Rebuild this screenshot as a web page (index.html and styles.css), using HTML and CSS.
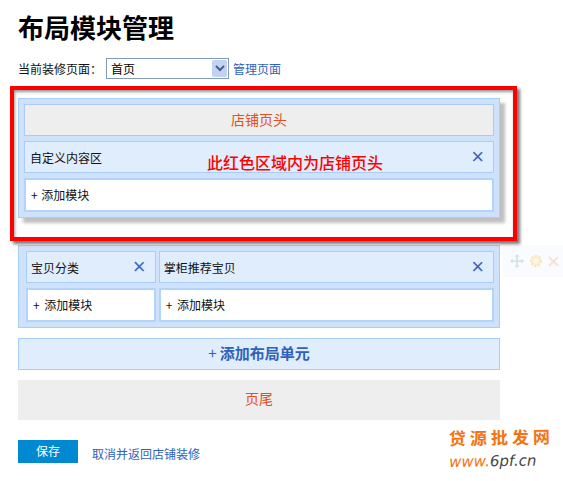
FILE: index.html
```html
<!DOCTYPE html>
<html lang="zh-CN">
<head>
    <meta charset="UTF-8">
    <title>布局模块管理</title>
    <link rel="stylesheet" href="styles.css">
</head>
<body>
    <main class="page">
        <h1>布局模块管理</h1>
        <div class="page-select">
            <span>当前装修页面：</span>
            <div class="select-box">
                <select>
                    <option>首页</option>
                </select>
                <span class="select-arrow">
                    <svg width="10" height="7" viewBox="0 0 10 7"><path d="M1 1l4 4 4-4" fill="none" stroke="#4a5f85" stroke-width="2"/></svg>
                </span>
            </div>
            <a href="#">管理页面</a>
        </div>

        <section class="unit unit-head">
            <div class="bar-grey">店铺页头</div>
            <div class="module">
                <span>自定义内容区</span>
                <a class="close" href="#">×</a>
            </div>
            <div class="add">+ 添加模块</div>
        </section>

        <section class="unit unit-cols">
            <div class="col col-side">
                <div class="module">
                    <span>宝贝分类</span>
                    <a class="close" href="#">×</a>
                </div>
                <div class="add">+ 添加模块</div>
            </div>
            <div class="col col-main">
                <div class="module">
                    <span>掌柜推荐宝贝</span>
                    <a class="close" href="#">×</a>
                </div>
                <div class="add">+ 添加模块</div>
            </div>
            <div class="unit-tools">
                <svg width="14" height="14" viewBox="0 0 16 16"><path d="M8 0l3 3H9v4h4V5l3 3-3 3V9H9v4h2l-3 3-3-3h2V9H3v2L0 8l3-3v2h4V3H5z" fill="#d6e2ea"/></svg>
                <svg width="14" height="14" viewBox="0 0 16 16"><circle cx="8" cy="8" r="5.5" fill="#fdf3da" stroke="#f9e5bd" stroke-width="3" stroke-dasharray="2.5 1.5"/><circle cx="8" cy="8" r="3.5" fill="#fef9ec" stroke="#fae9c8"/></svg>
                <svg width="11" height="11" viewBox="0 0 12 12"><path d="M1 1l10 10M11 1L1 11" stroke="#fde0d8" stroke-width="2.4"/></svg>
            </div>
        </section>

        <div class="add-unit"><span class="plus">+</span> 添加布局单元</div>
        <div class="foot-bar">页尾</div>

        <div class="actions">
            <button type="button">保存</button>
            <a href="#">取消并返回店铺装修</a>
        </div>
    </main>

    <!-- annotation drawn on top of the shot -->
    <div class="red-frame"></div>
    <div class="red-note">此红色区域内为店铺页头</div>
    <div class="watermark">
        <div class="wm-top">贷源批发网</div>
        <div class="wm-url">www.<i>6pf.cn</i></div>
    </div>
</body>
</html>
```

FILE: styles.css
```css
body {
    margin: 0;
    font-family: "Noto Sans CJK SC", "Liberation Sans", sans-serif;
    font-size: 12px;
    color: #111;
    background-color: #fff;
}
a {
    color: #2f62b8;
    text-decoration: none;
}
.page {
    width: 482px;
    height: 481px;
    padding-left: 18px;
}
h1 {
    margin: 0;
    padding-top: 9px;
    font-size: 26px;
    line-height: 36px;
    font-weight: 700;
    color: #000;
}
.page-select {
    display: flex;
    align-items: center;
    height: 22px;
    margin-top: 12px;
}
.page-select > span {
    width: 88px;
}
.select-box {
    position: relative;
    width: 123px;
    height: 21px;
    margin-right: 4px;
}
select {
    appearance: none;
    width: 100%;
    height: 100%;
    padding: 0 0 0 4px;
    border: 1px solid #7f9db9;
    border-radius: 0;
    background-color: #fff;
    font-family: inherit;
    font-size: 12px;
    color: #000;
}
.select-arrow {
    position: absolute;
    top: 2px;
    right: 2px;
    display: flex;
    align-items: center;
    justify-content: center;
    width: 15px;
    height: 17px;
    border-radius: 2px;
    background-color: #c1d2f2;
}
.unit {
    box-sizing: border-box;
    width: 482px;
    padding: 5px;
    border: 1px solid #aacdf8;
    background-color: #cfe2fb;
}
.unit-head {
    height: 120px;
    margin-top: 19px;
    box-shadow: 5px 5px 3px #c0c0c0;
}
.bar-grey {
    box-sizing: border-box;
    height: 32px;
    border: 1px solid #aacdf8;
    background-color: #eee;
    color: #e6501e;
    font-size: 14px;
    line-height: 28px;
    text-align: center;
}
.module {
    box-sizing: border-box;
    display: flex;
    align-items: center;
    justify-content: space-between;
    height: 32px;
    margin-top: 5px;
    padding: 0 9px 0 5px;
    border: 1px solid #aacdf8;
    background-color: #e0edfd;
}
.close {
    font-family: "Liberation Sans", sans-serif;
    font-size: 22px;
    line-height: 20px;
    color: #3a68c4;
}
.add {
    box-sizing: border-box;
    height: 34px;
    margin-top: 5px;
    padding-left: 5px;
    border: 2px solid #b4d3fa;
    background-color: #fff;
    line-height: 30px;
    word-spacing: 1px;
}
.unit-cols {
    position: relative;
    display: flex;
    gap: 3px;
    height: 83px;
    margin-top: 27px;
    padding-left: 7px;
}
.unit-cols .module {
    margin-top: 0;
    padding-left: 4px;
}
.unit-cols .add {
    word-spacing: 2px;
}
.col-side {
    width: 130px;
}
.col-main {
    width: 336px;
}
.unit-tools {
    position: absolute;
    top: -1px;
    left: 484px;
    display: flex;
    align-items: center;
    gap: 5px;
    width: 60px;
    height: 32px;
    padding-left: 7px;
    background-color: #f9fbff;
}
.add-unit {
    box-sizing: border-box;
    width: 482px;
    height: 32px;
    margin-top: 10px;
    border: 1px solid #aacdf8;
    background-color: #e0edfd;
    color: #2f62b8;
    font-size: 15px;
    font-weight: 700;
    line-height: 28px;
    text-align: center;
}
.plus {
    font-weight: 400;
}
.foot-bar {
    width: 482px;
    height: 40px;
    margin-top: 10px;
    background-color: #eee;
    color: #e6501e;
    font-size: 14px;
    line-height: 37px;
    text-align: center;
}
.actions {
    display: flex;
    align-items: flex-end;
    gap: 14px;
    margin-top: 20px;
    line-height: 18px;
}
button {
    width: 60px;
    height: 23px;
    padding: 0 0 2px;
    border: none;
    background-color: #0088d1;
    color: #fff;
    font-family: inherit;
    font-size: 12px;
}
.red-frame {
    position: absolute;
    top: 86px;
    left: 10px;
    box-sizing: border-box;
    width: 507px;
    height: 155px;
    border: 4px solid #f00;
    box-shadow: 3px 3px 3px #777, inset 1px 2px 3px #999;
}
.red-note {
    position: absolute;
    top: 150px;
    left: 207px;
    color: #f00;
    font-size: 16px;
    font-weight: 500;
    line-height: 24px;
}
.watermark {
    position: absolute;
    top: 425px;
    left: 449px;
    width: 114px;
    color: #f57212;
    font-weight: 700;
    transform: rotate(-1deg);
}
.wm-top {
    font-size: 17px;
    line-height: 24px;
    letter-spacing: 4px;
    white-space: nowrap;
}
.wm-url {
    margin-top: 2px;
    font-family: "DejaVu Sans", sans-serif;
    font-size: 15px;
    font-weight: 400;
    line-height: 20px;
    font-style: italic;
    white-space: nowrap;
}
.wm-url i {
    color: #444;
}
```
